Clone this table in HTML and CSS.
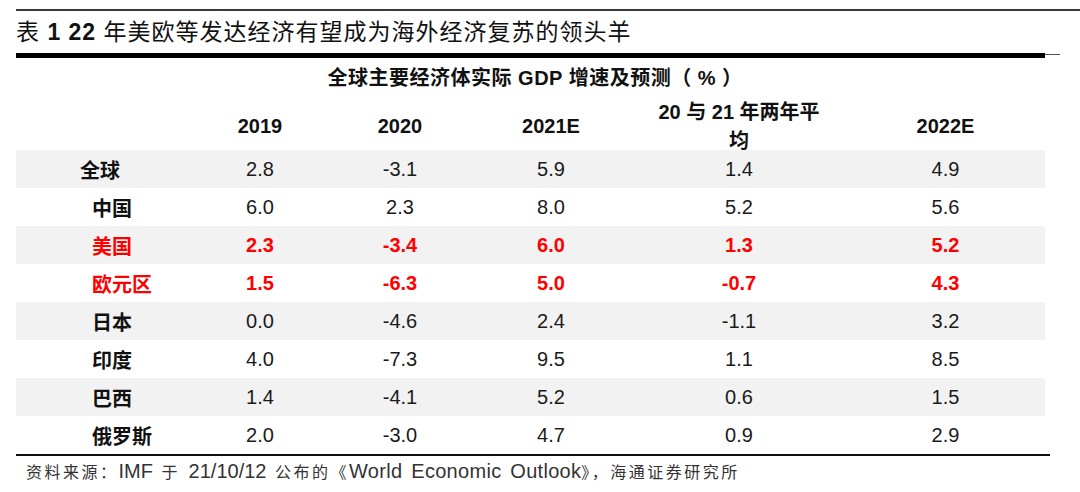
FILE: index.html
```html
<!DOCTYPE html>
<html lang="zh-CN">
<head>
<meta charset="utf-8">
<title>表 1</title>
<link rel="stylesheet" href="styles.css">
</head>
<body>
<div class="page">
  <div class="rule-thin"></div>
  <h1 class="title">表 <span class="num">1</span> <span class="num">22</span> 年美欧等发达经济有望成为海外经济复苏的领头羊</h1>
  <div class="rule-thick"></div>
  <div class="caption">全球主要经济体实际 <span class="num">GDP</span> 增速及预测（<span class="pct">%</span>）</div>
  <div class="table">
    <div class="row head">
      <div class="cell label"></div>
      <div class="cell">2019</div>
      <div class="cell">2020</div>
      <div class="cell">2021E</div>
      <div class="cell two-line">20 <span class="cjk">与</span> 21 <span class="cjk">年两年平<br>均</span></div>
      <div class="cell">2022E</div>
    </div>
    <div class="row shade">
      <div class="cell label label-wide">全球</div>
      <div class="cell">2.8</div><div class="cell">-3.1</div><div class="cell">5.9</div><div class="cell">1.4</div><div class="cell">4.9</div>
    </div>
    <div class="row">
      <div class="cell label">中国</div>
      <div class="cell">6.0</div><div class="cell">2.3</div><div class="cell">8.0</div><div class="cell">5.2</div><div class="cell">5.6</div>
    </div>
    <div class="row shade hot">
      <div class="cell label">美国</div>
      <div class="cell">2.3</div><div class="cell">-3.4</div><div class="cell">6.0</div><div class="cell">1.3</div><div class="cell">5.2</div>
    </div>
    <div class="row hot">
      <div class="cell label">欧元区</div>
      <div class="cell">1.5</div><div class="cell">-6.3</div><div class="cell">5.0</div><div class="cell">-0.7</div><div class="cell">4.3</div>
    </div>
    <div class="row shade">
      <div class="cell label">日本</div>
      <div class="cell">0.0</div><div class="cell">-4.6</div><div class="cell">2.4</div><div class="cell">-1.1</div><div class="cell">3.2</div>
    </div>
    <div class="row">
      <div class="cell label">印度</div>
      <div class="cell">4.0</div><div class="cell">-7.3</div><div class="cell">9.5</div><div class="cell">1.1</div><div class="cell">8.5</div>
    </div>
    <div class="row shade">
      <div class="cell label">巴西</div>
      <div class="cell">1.4</div><div class="cell">-4.1</div><div class="cell">5.2</div><div class="cell">0.6</div><div class="cell">1.5</div>
    </div>
    <div class="row">
      <div class="cell label">俄罗斯</div>
      <div class="cell">2.0</div><div class="cell">-3.0</div><div class="cell">4.7</div><div class="cell">0.9</div><div class="cell">2.9</div>
    </div>
  </div>
  <div class="rule-bottom"></div>
  <p class="source"><span class="cjk">资料来源：</span>IMF <span class="cjk">于</span> 21/10/12 <span class="cjk">公布的《</span><span class="pub">World Economic Outlook</span><span class="cjk">》，海通证券研究所</span></p>
</div>
</body>
</html>
```

FILE: styles.css
```css
* {
  box-sizing: border-box;
}

html, body {
  margin: 0;
  padding: 0;
  background: #ffffff;
}

body {
  width: 1080px;
  height: 492px;
  overflow: hidden;
  font-family: "Liberation Sans", Arial, "Noto Sans CJK SC", sans-serif;
  color: #1a1a1a;
}

.page {
  padding-top: 9px;
  padding-left: 16px;
}

.cjk {
  font-family: "Noto Sans CJK SC", sans-serif;
}

.rule-thin {
  height: 2px;
  background: #3a3a3a;
}

.title {
  margin: 0;
  height: 42px;
  line-height: 42px;
  font-family: "Liberation Sans", "Noto Sans CJK SC", sans-serif;
  font-size: 23px;
  font-weight: 400;
  letter-spacing: 1px;
  color: #111;
  white-space: nowrap;
}

.title .num {
  font-weight: 700;
}

.rule-thick {
  position: relative;
  width: 1029px;
  height: 5px;
  background: #000;
}

.rule-thick::after {
  content: "";
  position: absolute;
  left: 100%;
  top: 1px;
  width: 15px;
  height: 1px;
  background: #555;
}

.caption {
  width: 1046px;
  height: 41px;
  line-height: 41px;
  padding-right: 8px;
  text-align: center;
  font-family: "Liberation Sans", "Noto Sans CJK SC", sans-serif;
  font-size: 20px;
  font-weight: 700;
  letter-spacing: 0.5px;
  color: #111;
  white-space: nowrap;
}

.caption .pct {
  padding: 0 6px;
}

.table {
  width: 1029px;
  display: flex;
  flex-direction: column;
}

.row {
  display: grid;
  grid-template-columns: 174px 140px 140px 162px 214px 199px;
  height: 38px;
  align-items: center;
  font-size: 20px;
  color: #1a1a1a;
}

.row.shade {
  background: #f2f2f2;
}

.row.head {
  height: 51px;
  font-weight: 700;
  color: #111;
}

.row.head .cell {
  position: relative;
  top: -2px;
}

.cell {
  text-align: center;
  white-space: nowrap;
}

.two-line {
  line-height: 28px;
  white-space: normal;
}

.label {
  text-align: left;
  padding-left: 76px;
  font-family: "Noto Sans CJK SC", sans-serif;
  font-weight: 700;
  font-size: 20px;
  color: #111;
}

.label-wide {
  padding-left: 64px;
}

.row.hot,
.row.hot .label {
  color: #ff0000;
  font-weight: 700;
}

.rule-bottom {
  width: 1034px;
  height: 2px;
  background: #111;
}

.source {
  margin: 0;
  padding-left: 10px;
  height: 30px;
  line-height: 30px;
  font-size: 20px;
  word-spacing: 3px;
  color: #333;
  white-space: nowrap;
}

.source .cjk {
  font-size: 16px;
  letter-spacing: 2.5px;
}

.source .pub {
  letter-spacing: 0.3px;
}
```
